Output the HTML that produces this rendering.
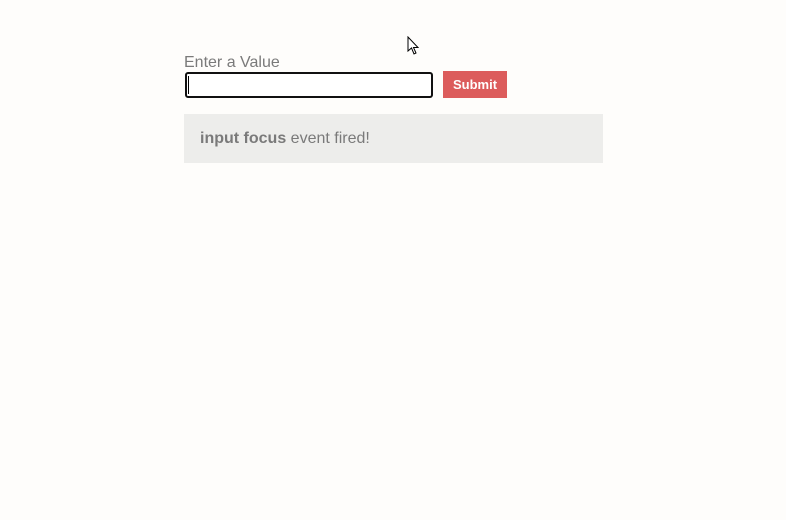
<!DOCTYPE html>
<html><head><style>
html,body{margin:0;padding:0;background:#fefdfb;width:786px;height:520px;overflow:hidden;font-family:"Liberation Sans",Arial,sans-serif;position:relative}
.lbl{position:absolute;left:184px;top:54px;font-size:16px;color:#7a7a7a}
.inp{position:absolute;left:185px;top:72px;width:244px;height:22px;border:2px solid #111;border-radius:3px;background:#fff;box-sizing:content-box}
.inp:before{content:"";position:absolute;left:1px;top:2px;width:1px;height:18px;background:#000}
.btn{position:absolute;left:443px;top:71px;width:64px;height:27px;background:#dc5c5c;color:#fff;font-size:13px;font-weight:bold;text-align:center;line-height:27px}
.box{position:absolute;left:184px;top:114px;width:419px;height:49px;background:#ededeb;color:#7a7a7a;font-size:16px;line-height:50px;box-sizing:border-box;padding-left:16px}
.cur{position:absolute;left:407px;top:36px}
</style></head><body>
<div class="lbl">Enter a Value</div>
<div class="inp"></div>
<div class="btn">Submit</div>
<div class="box"><b>input focus</b> event fired!</div>
<svg class="cur" width="14" height="20" viewBox="0 0 14 20"><path d="M1 1 L1 15 L4.5 12 L7 18 L9 17 L6.5 11.5 L11 11.5 Z" fill="#fff" stroke="#000" stroke-width="1"/></svg>
</body></html>
